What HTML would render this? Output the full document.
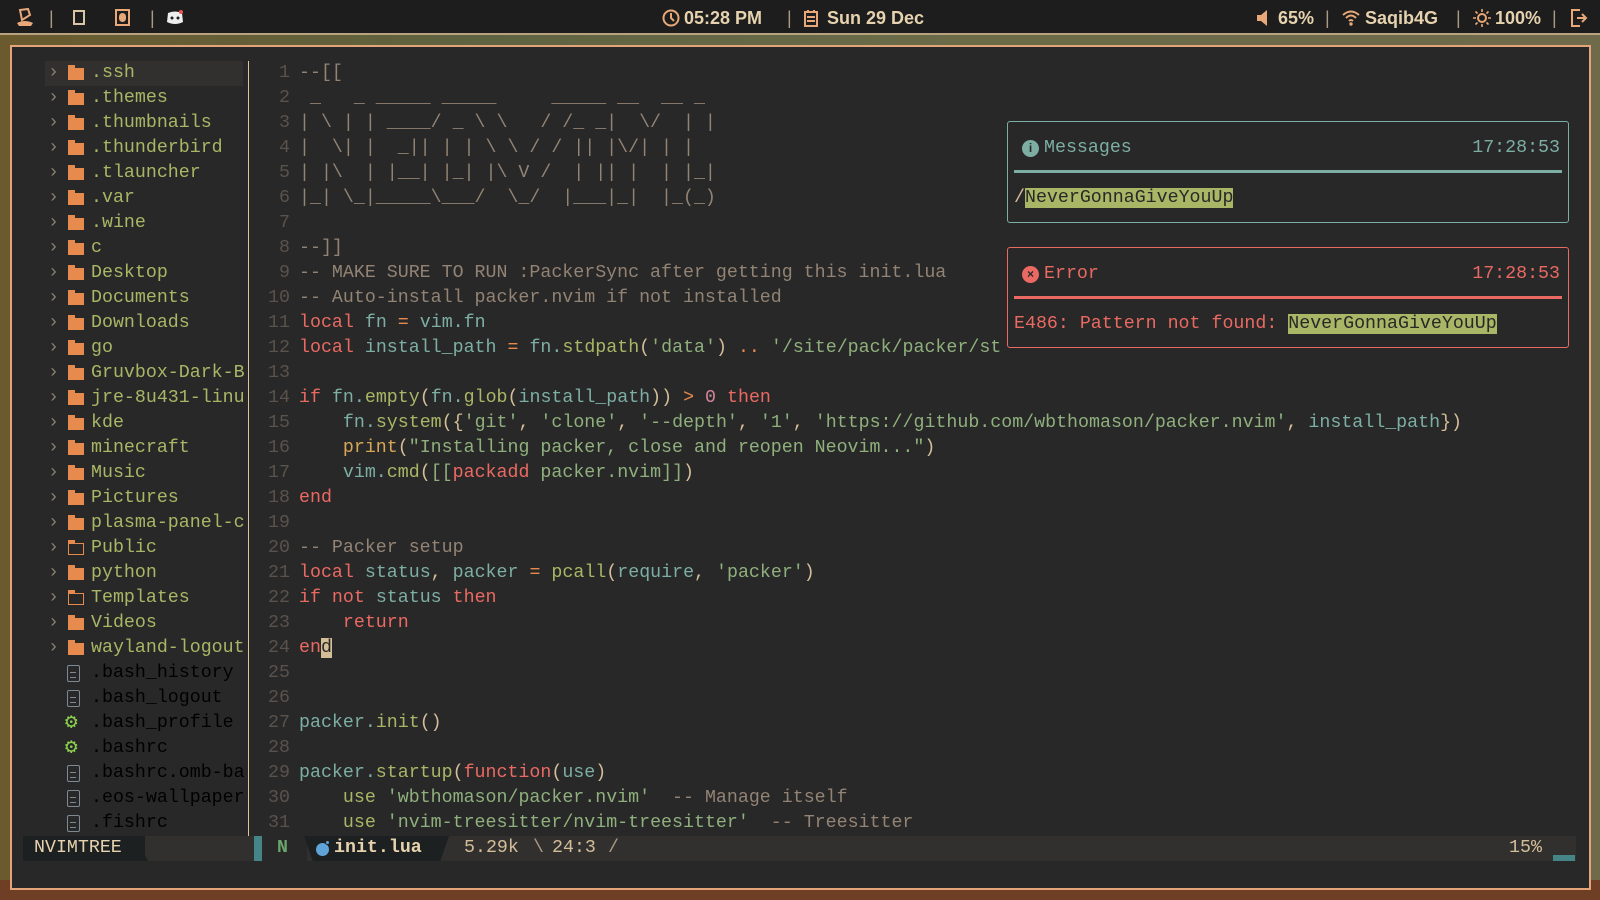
<!DOCTYPE html>
<html><head><meta charset="utf-8"><style>
*{margin:0;padding:0;box-sizing:border-box}
body{width:1600px;height:900px;overflow:hidden;position:relative;background:linear-gradient(90deg,#6a5a2e 0%,#5e6340 30%,#6b6b48 60%,#6e6a4a 100%);font-family:"Liberation Mono",monospace}
.bot{position:absolute;left:0;right:0;top:880px;height:20px;background:#6e3f24}
.bar{position:absolute;left:0;top:0;width:1600px;height:35px;background:#1d1d1d;border-bottom:2px solid #b9a27f;color:#e6d2ae;font-family:"Liberation Sans",sans-serif;font-size:18px;font-weight:bold}
.bar span{position:absolute;top:7px;line-height:22px}
.sep{color:#a89a85;font-weight:normal}
.win{position:absolute;left:10px;top:45px;width:1581px;height:845px;background:#282828;border:2px solid #e3a47a}
.in{position:absolute;left:0;top:2px;width:1577px;height:839px}
.row{position:absolute;height:25px;line-height:25px;font-size:18.3px;white-space:pre}
.ln{position:absolute;left:238px;width:40px;text-align:right;color:#5a524c}
.cd{position:absolute;left:287px;color:#d4be98}
.r{color:#ea6962}.b{color:#7daea3}.g{color:#a9b665}.s{color:#8fb07d}.o{color:#e78a4e}.p{color:#d3869b}.y{color:#d8a657}.c{color:#928374}
.chev{position:absolute;left:36px;color:#8a7f70}
.fold{position:absolute;left:56px;top:7px;width:16px;height:12px;background:#e78a4e}
.fold:before{content:"";position:absolute;left:0;top:-3px;width:7px;height:3px;background:#e78a4e}
.fold.o2{background:none;border:1.5px solid #e78a4e}
.fold.o2:before{top:-4px;left:-1.5px}
.fn{position:absolute;left:79px}
.file{position:absolute;left:55px;top:4px;width:13px;height:17px;border:1.5px solid #7c8a93;border-radius:2px}
.file:after{content:"";position:absolute;left:2px;top:6px;width:6px;height:4px;border-top:1.5px solid #7c8a93;border-bottom:1.5px solid #7c8a93}
.gear{position:absolute;left:53px;color:#8bd04d;font-size:21px}
.vsep{position:absolute;left:236px;top:12px;width:1px;height:775px;background:#e3c49a}
.pop{position:absolute;border:1.5px solid;border-radius:3px;background:#282828}
.pop .line{position:absolute;left:6px;right:6px;top:48px;height:3px}
</style></head><body>
<div class="bot"></div>
<div class="bar">
<svg style="position:absolute;left:14px;top:6px" width="22" height="22" viewBox="0 0 22 22"><path d="M3 17 Q11 13 19 17 L17 20 H5Z" fill="#e8a878"/><path d="M8 14 L6 4 L14 3 L16 9 Z" fill="none" stroke="#e8a878" stroke-width="2"/></svg>
<span class="sep" style="left:49px">|</span>
<div style="position:absolute;left:73px;top:10px;width:12px;height:15px;border:2px solid #d8c6a6"></div>
<div style="position:absolute;left:115px;top:9px;width:15px;height:17px;border:2px solid #e8a878"><div style="margin:2px auto;width:7px;height:9px;border-radius:4px;background:#e8a878"></div></div>
<span class="sep" style="left:150px">|</span>
<svg style="position:absolute;left:166px;top:10px" width="18" height="15" viewBox="0 0 18 15"><path d="M2 3 Q9 0 16 3 L17 12 Q9 16 1 12Z" fill="#eee"/><circle cx="6" cy="8" r="1.5" fill="#1d1d1d"/><circle cx="12" cy="8" r="1.5" fill="#1d1d1d"/><circle cx="15" cy="2" r="2" fill="#e55"/></svg>
<svg style="position:absolute;left:662px;top:9px" width="18" height="18" viewBox="0 0 18 18"><circle cx="9" cy="9" r="7.5" fill="none" stroke="#e8a878" stroke-width="2"/><path d="M9 4V9L12 12" stroke="#e8a878" stroke-width="2" fill="none"/></svg>
<span style="left:684px">05:28 PM</span>
<span class="sep" style="left:787px">|</span>
<svg style="position:absolute;left:804px;top:9px" width="14" height="18" viewBox="0 0 14 18"><rect x="1" y="3" width="12" height="14" fill="none" stroke="#e8a878" stroke-width="2"/><path d="M4 1V4M10 1V4M3 8H11M3 12H11" stroke="#e8a878" stroke-width="2"/></svg>
<span style="left:827px">Sun 29 Dec</span>
<svg style="position:absolute;left:1256px;top:9px" width="16" height="18" viewBox="0 0 16 18"><path d="M1 6H5L11 1V17L5 12H1Z" fill="#e8a878"/></svg>
<span style="left:1278px">65%</span>
<span class="sep" style="left:1325px">|</span>
<svg style="position:absolute;left:1342px;top:9px" width="18" height="18" viewBox="0 0 18 18"><path d="M1 6Q9 -1 17 6M4 9Q9 4 14 9M7 12Q9 10 11 12" fill="none" stroke="#e8a878" stroke-width="2"/><circle cx="9" cy="15" r="1.7" fill="#e8a878"/></svg>
<span style="left:1365px">Saqib4G</span>
<span class="sep" style="left:1456px">|</span>
<svg style="position:absolute;left:1472px;top:8px" width="20" height="20" viewBox="0 0 20 20"><circle cx="10" cy="10" r="4" fill="none" stroke="#e8a878" stroke-width="2"/><path d="M10 1V4M10 16V19M1 10H4M16 10H19M3.5 3.5L5.5 5.5M14.5 14.5L16.5 16.5M3.5 16.5L5.5 14.5M14.5 5.5L16.5 3.5" stroke="#e8a878" stroke-width="1.6"/></svg>
<span style="left:1495px">100%</span>
<span class="sep" style="left:1552px">|</span>
<svg style="position:absolute;left:1570px;top:8px" width="18" height="20" viewBox="0 0 18 20"><path d="M10 2H2V18H10" fill="none" stroke="#e8a878" stroke-width="2"/><path d="M7 10H15M12 6L16 10L12 14" fill="none" stroke="#e8a878" stroke-width="2"/></svg>
</div>

<div class="win"><div class="in">
<div style="position:absolute;left:33px;top:12px;width:198px;height:25px;background:#32302f"></div>
<div class="vsep"></div>

<div class="row" style="left:0;top:12px;width:240px"><span class="chev">›</span><div class="fold"></div><span class="fn g">.ssh</span></div>
<div class="row" style="left:0;top:37px;width:240px"><span class="chev">›</span><div class="fold"></div><span class="fn g">.themes</span></div>
<div class="row" style="left:0;top:62px;width:240px"><span class="chev">›</span><div class="fold"></div><span class="fn g">.thumbnails</span></div>
<div class="row" style="left:0;top:87px;width:240px"><span class="chev">›</span><div class="fold"></div><span class="fn g">.thunderbird</span></div>
<div class="row" style="left:0;top:112px;width:240px"><span class="chev">›</span><div class="fold"></div><span class="fn g">.tlauncher</span></div>
<div class="row" style="left:0;top:137px;width:240px"><span class="chev">›</span><div class="fold"></div><span class="fn g">.var</span></div>
<div class="row" style="left:0;top:162px;width:240px"><span class="chev">›</span><div class="fold"></div><span class="fn g">.wine</span></div>
<div class="row" style="left:0;top:187px;width:240px"><span class="chev">›</span><div class="fold"></div><span class="fn g">c</span></div>
<div class="row" style="left:0;top:212px;width:240px"><span class="chev">›</span><div class="fold"></div><span class="fn g">Desktop</span></div>
<div class="row" style="left:0;top:237px;width:240px"><span class="chev">›</span><div class="fold"></div><span class="fn g">Documents</span></div>
<div class="row" style="left:0;top:262px;width:240px"><span class="chev">›</span><div class="fold"></div><span class="fn g">Downloads</span></div>
<div class="row" style="left:0;top:287px;width:240px"><span class="chev">›</span><div class="fold"></div><span class="fn g">go</span></div>
<div class="row" style="left:0;top:312px;width:240px"><span class="chev">›</span><div class="fold"></div><span class="fn g">Gruvbox-Dark-B</span></div>
<div class="row" style="left:0;top:337px;width:240px"><span class="chev">›</span><div class="fold"></div><span class="fn g">jre-8u431-linu</span></div>
<div class="row" style="left:0;top:362px;width:240px"><span class="chev">›</span><div class="fold"></div><span class="fn g">kde</span></div>
<div class="row" style="left:0;top:387px;width:240px"><span class="chev">›</span><div class="fold"></div><span class="fn g">minecraft</span></div>
<div class="row" style="left:0;top:412px;width:240px"><span class="chev">›</span><div class="fold"></div><span class="fn g">Music</span></div>
<div class="row" style="left:0;top:437px;width:240px"><span class="chev">›</span><div class="fold"></div><span class="fn g">Pictures</span></div>
<div class="row" style="left:0;top:462px;width:240px"><span class="chev">›</span><div class="fold"></div><span class="fn g">plasma-panel-c</span></div>
<div class="row" style="left:0;top:487px;width:240px"><span class="chev">›</span><div class="fold o2"></div><span class="fn g">Public</span></div>
<div class="row" style="left:0;top:512px;width:240px"><span class="chev">›</span><div class="fold"></div><span class="fn g">python</span></div>
<div class="row" style="left:0;top:537px;width:240px"><span class="chev">›</span><div class="fold o2"></div><span class="fn g">Templates</span></div>
<div class="row" style="left:0;top:562px;width:240px"><span class="chev">›</span><div class="fold"></div><span class="fn g">Videos</span></div>
<div class="row" style="left:0;top:587px;width:240px"><span class="chev">›</span><div class="fold"></div><span class="fn g">wayland-logout</span></div>
<div class="row" style="left:0;top:612px;width:240px"><div class="file"></div><span class="fn">.bash_history</span></div>
<div class="row" style="left:0;top:637px;width:240px"><div class="file"></div><span class="fn">.bash_logout</span></div>
<div class="row" style="left:0;top:662px;width:240px"><span class="gear">⚙</span><span class="fn">.bash_profile</span></div>
<div class="row" style="left:0;top:687px;width:240px"><span class="gear">⚙</span><span class="fn">.bashrc</span></div>
<div class="row" style="left:0;top:712px;width:240px"><div class="file"></div><span class="fn">.bashrc.omb-ba</span></div>
<div class="row" style="left:0;top:737px;width:240px"><div class="file"></div><span class="fn">.eos-wallpaper</span></div>
<div class="row" style="left:0;top:762px;width:240px"><div class="file"></div><span class="fn">.fishrc</span></div>

<div class="row" style="left:0;top:12px"><span class="ln">1</span><span class="cd c">--[[</span></div>
<div class="row" style="left:0;top:37px"><span class="ln">2</span><span class="cd c"> _   _ _____ _____     _____ __  __ _</span></div>
<div class="row" style="left:0;top:62px"><span class="ln">3</span><span class="cd c">| \ | | ____/ _ \ \   / /_ _|  \/  | |</span></div>
<div class="row" style="left:0;top:87px"><span class="ln">4</span><span class="cd c">|  \| |  _|| | | \ \ / / || |\/| | |</span></div>
<div class="row" style="left:0;top:112px"><span class="ln">5</span><span class="cd c">| |\  | |__| |_| |\ V /  | || |  | |_|</span></div>
<div class="row" style="left:0;top:137px"><span class="ln">6</span><span class="cd c">|_| \_|_____\___/  \_/  |___|_|  |_(_)</span></div>
<div class="row" style="left:0;top:162px"><span class="ln">7</span></div>
<div class="row" style="left:0;top:187px"><span class="ln">8</span><span class="cd c">--]]</span></div>
<div class="row" style="left:0;top:212px"><span class="ln">9</span><span class="cd c">-- MAKE SURE TO RUN :PackerSync after getting this init.lua</span></div>
<div class="row" style="left:0;top:237px"><span class="ln">10</span><span class="cd c">-- Auto-install packer.nvim if not installed</span></div>
<div class="row" style="left:0;top:262px"><span class="ln">11</span><span class="cd"><span class="r">local</span> <span class="b">fn</span> <span class="o">=</span> <span class="b">vim.fn</span></span></div>
<div class="row" style="left:0;top:287px"><span class="ln">12</span><span class="cd"><span class="r">local</span> <span class="b">install_path</span> <span class="o">=</span> <span class="b">fn.</span><span class="g">stdpath</span>(<span class="s">'data'</span>) <span class="o">..</span> <span class="s">'/site/pack/packer/st</span></span></div>
<div class="row" style="left:0;top:312px"><span class="ln">13</span></div>
<div class="row" style="left:0;top:337px"><span class="ln">14</span><span class="cd"><span class="r">if</span> <span class="b">fn.</span><span class="g">empty</span>(<span class="b">fn.</span><span class="g">glob</span>(<span class="b">install_path</span>)) <span class="o">&gt;</span> <span class="p">0</span> <span class="r">then</span></span></div>
<div class="row" style="left:0;top:362px"><span class="ln">15</span><span class="cd">    <span class="b">fn.</span><span class="g">system</span>({<span class="s">'git'</span>, <span class="s">'clone'</span>, <span class="s">'--depth'</span>, <span class="s">'1'</span>, <span class="s">'https://github.com/wbthomason/packer.nvim'</span>, <span class="b">install_path</span>})</span></div>
<div class="row" style="left:0;top:387px"><span class="ln">16</span><span class="cd">    <span class="y">print</span>(<span class="s">"Installing packer, close and reopen Neovim..."</span>)</span></div>
<div class="row" style="left:0;top:412px"><span class="ln">17</span><span class="cd">    <span class="b">vim.</span><span class="g">cmd</span>(<span class="s">[[</span><span class="r">packadd</span> <span class="s">packer.nvim]]</span>)</span></div>
<div class="row" style="left:0;top:437px"><span class="ln">18</span><span class="cd r">end</span></div>
<div class="row" style="left:0;top:462px"><span class="ln">19</span></div>
<div class="row" style="left:0;top:487px"><span class="ln">20</span><span class="cd c">-- Packer setup</span></div>
<div class="row" style="left:0;top:512px"><span class="ln">21</span><span class="cd"><span class="r">local</span> <span class="b">status</span>, <span class="b">packer</span> <span class="o">=</span> <span class="g">pcall</span>(<span class="b">require</span>, <span class="s">'packer'</span>)</span></div>
<div class="row" style="left:0;top:537px"><span class="ln">22</span><span class="cd"><span class="r">if not</span> <span class="b">status</span> <span class="r">then</span></span></div>
<div class="row" style="left:0;top:562px"><span class="ln">23</span><span class="cd">    <span class="r">return</span></span></div>
<div class="row" style="left:0;top:587px"><span class="ln">24</span><span class="cd"><span class="r">en</span><span style="background:#d4be98;color:#282828">d</span></span></div>
<div class="row" style="left:0;top:612px"><span class="ln">25</span></div>
<div class="row" style="left:0;top:637px"><span class="ln">26</span></div>
<div class="row" style="left:0;top:662px"><span class="ln">27</span><span class="cd"><span class="b">packer.</span><span class="g">init</span>()</span></div>
<div class="row" style="left:0;top:687px"><span class="ln">28</span></div>
<div class="row" style="left:0;top:712px"><span class="ln">29</span><span class="cd"><span class="b">packer.</span><span class="g">startup</span>(<span class="r">function</span>(<span class="b">use</span>)</span></div>
<div class="row" style="left:0;top:737px"><span class="ln">30</span><span class="cd">    <span class="g">use</span> <span class="s">'wbthomason/packer.nvim'</span>  <span class="c">-- Manage itself</span></span></div>
<div class="row" style="left:0;top:762px"><span class="ln">31</span><span class="cd">    <span class="g">use</span> <span class="s">'nvim-treesitter/nvim-treesitter'</span>  <span class="c">-- Treesitter</span></span></div>

<div style="position:absolute;left:11px;top:787px;width:1553px;height:25px;background:#32302f"></div>
<div style="position:absolute;left:11px;top:787px;width:122px;height:25px;background:#1d2021"></div>
<div style="position:absolute;left:120px;top:787px;width:16px;height:25px;background:#1d2021;clip-path:polygon(0 0,20% 0,100% 100%,0 100%)"></div>
<div class="row" style="left:22px;top:787px;color:#e6d2ae">NVIMTREE</div>
<div style="position:absolute;left:242px;top:787px;width:8px;height:25px;background:#458588"></div>
<div style="position:absolute;left:250px;top:787px;width:45px;height:25px;background:#282828"></div>
<div class="row" style="left:265px;top:787px;color:#6aa56e;font-weight:bold">N</div>
<div style="position:absolute;left:292px;top:787px;width:145px;height:25px;background:#1d2021;clip-path:polygon(0 0,100% 0,94% 100%,6% 100%)"></div>
<div style="position:absolute;left:304px;top:794px;width:13px;height:13px;border-radius:50%;background:#5fa4d8"></div>
<div style="position:absolute;left:313px;top:791px;width:5px;height:5px;border-radius:50%;background:#5fa4d8;border:1px solid #1d2021"></div>
<div class="row" style="left:322px;top:787px;color:#e6d2ae;font-weight:bold">init.lua</div>
<div class="row" style="left:452px;top:787px;color:#d4be98">5.29k</div>
<div class="row" style="left:521px;top:787px;color:#a89984">\</div>
<div class="row" style="left:540px;top:787px;color:#d4be98">24:3</div>
<div class="row" style="left:596px;top:787px;color:#a89984">/</div>
<div class="row" style="left:1497px;top:787px;color:#d4be98">15%</div>
<div style="position:absolute;left:1541px;top:806px;width:22px;height:6px;background:#458588"></div>

<div class="pop" style="left:995px;top:72px;width:562px;height:102px;border-color:#7daea3">
 <div style="position:absolute;left:14px;top:18px;width:17px;height:17px;border-radius:50%;background:#7daea3;color:#282828;font:bold 12px 'Liberation Sans',sans-serif;text-align:center;line-height:17px">i</div>
 <div class="row" style="left:36px;top:14px;color:#7daea3">Messages</div>
 <div class="row" style="right:8px;top:14px;color:#7daea3">17:28:53</div>
 <div class="line" style="background:#7daea3"></div>
 <div class="row" style="left:6px;top:64px;color:#d4be98">/<span style="background:#a9b665;color:#282828">NeverGonnaGiveYouUp</span></div>
</div>
<div class="pop" style="left:995px;top:198px;width:562px;height:101px;border-color:#ea6962">
 <div style="position:absolute;left:14px;top:18px;width:17px;height:17px;border-radius:50%;background:#ea6962;color:#282828;font:bold 12px 'Liberation Sans',sans-serif;text-align:center;line-height:17px">×</div>
 <div class="row" style="left:36px;top:14px;color:#ea6962">Error</div>
 <div class="row" style="right:8px;top:14px;color:#ea6962">17:28:53</div>
 <div class="line" style="background:#ea6962"></div>
 <div class="row" style="left:6px;top:64px;color:#ea6962">E486: Pattern not found: <span style="background:#a9b665;color:#282828">NeverGonnaGiveYouUp</span></div>
</div>
</div></div>
</body></html>
